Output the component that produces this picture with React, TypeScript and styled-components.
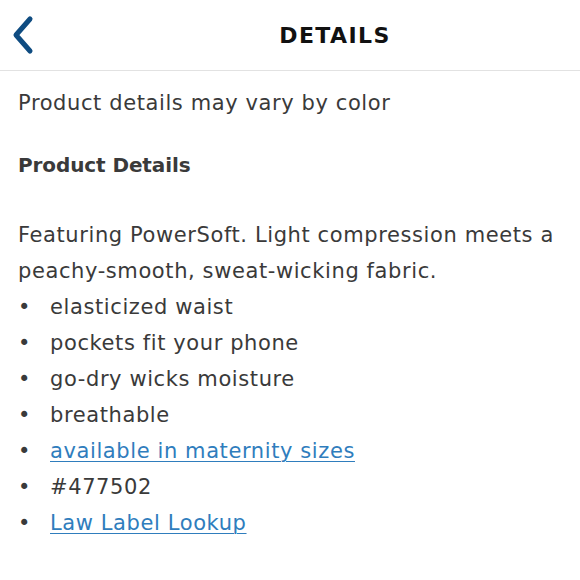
import React from "react";
import styled, { createGlobalStyle } from "styled-components";

const Global = createGlobalStyle`
  html, body { margin: 0; padding: 0; background: #fff; }
  body { font-family: "DejaVu Sans", sans-serif; -webkit-font-smoothing: antialiased; }
`;

const Page = styled.div`
  width: 580px;
  height: 580px;
  background: #fff;
  overflow: hidden;
`;

const Header = styled.header`
  position: relative;
  height: 70px;
  border-bottom: 1px solid #e2e2e2;
  display: flex;
  align-items: center;
  justify-content: center;
`;

const BackButton = styled.button`
  position: absolute;
  left: 8px;
  top: 14px;
  width: 34px;
  height: 42px;
  border: none;
  background: none;
  padding: 0;
  display: flex;
  align-items: center;
  justify-content: center;
`;

const Title = styled.h1`
  margin: 0 0 0 90px;
  font-size: 22px;
  font-weight: 700;
  letter-spacing: 1.4px;
  color: #111;
`;

const Content = styled.main`
  padding: 14px 18px 0 18px;
  color: #3a3a3a;
  font-size: 21px;
  letter-spacing: 0.6px;
  line-height: 36px;
`;

const Note = styled.p`
  margin: 0;
`;

const SectionTitle = styled.h2`
  margin: 26px 0 0 0;
  font-size: 20px;
  font-weight: 700;
  letter-spacing: -0.1px;
  line-height: 36px;
  color: #3a3a3a;
`;

const Paragraph = styled.p`
  margin: 34px 0 0 0;
`;

const List = styled.ul`
  margin: 0;
  padding: 0;
  list-style: none;
`;

const Item = styled.li`
  display: flex;
  align-items: baseline;
`;

const Bullet = styled.span`
  width: 32px;
  flex: none;
`;

const Link = styled.a`
  color: #2f7dbd;
  text-decoration: underline;
  text-underline-offset: 3px;
  text-decoration-thickness: 1px;
`;

const items: { text: string; link?: boolean }[] = [
  { text: "elasticized waist" },
  { text: "pockets fit your phone" },
  { text: "go-dry wicks moisture" },
  { text: "breathable" },
  { text: "available in maternity sizes", link: true },
  { text: "#477502" },
  { text: "Law Label Lookup", link: true },
];

export default function App() {
  return (
    <Page>
      <Global />
      <Header>
        <BackButton aria-label="Back">
          <svg width="34" height="42" viewBox="0 0 34 42">
            <path d="M22 5 L8 21 L22 37" fill="none" stroke="#0f4c81" strokeWidth="5" strokeLinecap="round" strokeLinejoin="round" />
          </svg>
        </BackButton>
        <Title>DETAILS</Title>
      </Header>
      <Content>
        <Note>Product details may vary by color</Note>
        <SectionTitle>Product Details</SectionTitle>
        <Paragraph>Featuring PowerSoft. Light compression meets a peachy-smooth, sweat-wicking fabric.</Paragraph>
        <List>
          {items.map((it) => (
            <Item key={it.text}>
              <Bullet>•</Bullet>
              {it.link ? <Link href="#">{it.text}</Link> : <span>{it.text}</span>}
            </Item>
          ))}
        </List>
      </Content>
    </Page>
  );
}
